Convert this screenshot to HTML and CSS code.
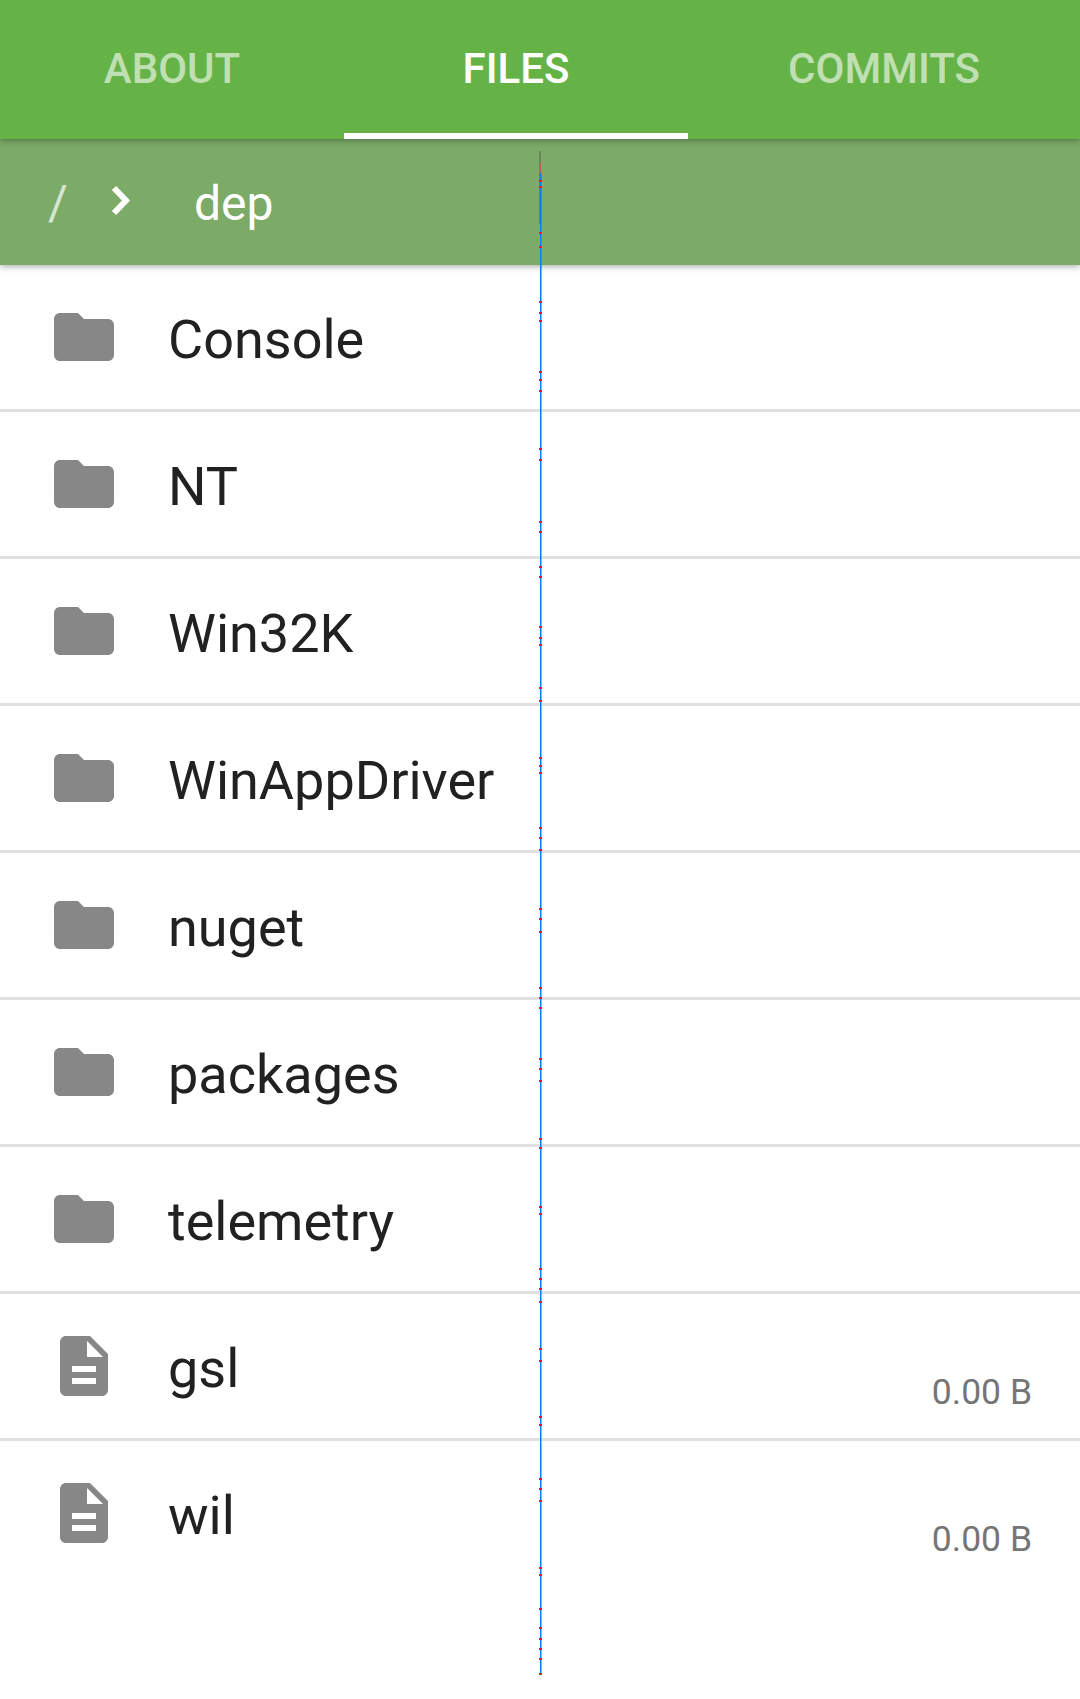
FILE: index.html
```html
<!DOCTYPE html>
<html lang="en">
<head>
    <meta charset="UTF-8">
    <meta name="viewport" content="width=device-width, initial-scale=1.0">
    <title>Files</title>
    <link rel="stylesheet" href="styles.css">
</head>
<body>
    <svg width="0" height="0" class="defs">
        <symbol id="folder" viewBox="0 0 60 48">
            <path d="M6 0H24L30 6H54C57.3 6 60 8.7 60 12V42C60 45.3 57.300 48 54 48H6C2.700 48 0 45.300 0 42V6C0 2.700 2.700 0 6 0Z"/>
        </symbol>
        <symbol id="file" viewBox="0 0 48 60">
            <path fill-rule="evenodd" d="M6 0H30L48 18V54C48 57.300 45.300 60 42 60H6C2.700 60 0 57.300 0 54V6C0 2.700 2.700 0 6 0ZM27 5V21H43ZM12 30V36H36V30ZM12 42V48H36V42Z"/>
        </symbol>
    </svg>

    <nav class="tabs">
        <a class="tab">ABOUT</a>
        <a class="tab active">FILES</a>
        <a class="tab">COMMITS</a>
    </nav>

    <div class="crumbs">
        <span class="root">/</span>
        <svg class="chevron" viewBox="0 0 20 32"><path d="M3 3L15 15.500L3 28"/></svg>
        <span class="dir">dep</span>
    </div>

    <ul class="list">
        <li class="row"><svg class="icon"><use href="#folder"/></svg><span class="name">Console</span></li>
        <li class="row"><svg class="icon"><use href="#folder"/></svg><span class="name">NT</span></li>
        <li class="row"><svg class="icon"><use href="#folder"/></svg><span class="name">Win32K</span></li>
        <li class="row"><svg class="icon"><use href="#folder"/></svg><span class="name">WinAppDriver</span></li>
        <li class="row"><svg class="icon"><use href="#folder"/></svg><span class="name">nuget</span></li>
        <li class="row"><svg class="icon"><use href="#folder"/></svg><span class="name">packages</span></li>
        <li class="row"><svg class="icon"><use href="#folder"/></svg><span class="name">telemetry</span></li>
        <li class="row"><svg class="icon doc"><use href="#file"/></svg><span class="name">gsl</span><span class="size">0.00 B</span></li>
        <li class="row last"><svg class="icon doc"><use href="#file"/></svg><span class="name">wil</span><span class="size">0.00 B</span></li>
    </ul>

    <!-- layout bounds guide drawn over the page -->
    <svg class="guide" viewBox="0 0 4 1530">
        <rect class="guide-grey" x="1" y="0" width="2" height="73"/>
        <rect class="guide-pink" x="1" y="12" width="2" height="11"/>
        <rect class="guide-blue" x="2" y="22" width="1.500" height="1500"/>
        <path class="guide-dots" d="M1 29h3v2h-3zM1 35h3v2h-3zM1 81h3v2h-3zM1 95h3v2h-3zM1 150h3v2h-3zM1 161h3v2h-3zM1 169h3v2h-3zM1 220h3v2h-3zM1 228h3v2h-3zM1 239h3v2h-3zM1 297h3v2h-3zM1 308h3v2h-3zM1 370h3v2h-3zM1 380h3v2h-3zM1 415h3v2h-3zM1 425h3v2h-3zM1 475h3v2h-3zM1 486h3v2h-3zM1 493h3v2h-3zM1 536h3v2h-3zM1 549h3v2h-3zM1 606h3v2h-3zM1 614h3v2h-3zM1 621h3v2h-3zM1 676h3v2h-3zM1 686h3v2h-3zM1 698h3v2h-3zM1 757h3v2h-3zM1 767h3v2h-3zM1 780h3v2h-3zM1 836h3v2h-3zM1 846h3v2h-3zM1 856h3v2h-3zM1 907h3v2h-3zM1 917h3v2h-3zM1 929h3v2h-3zM1 987h3v2h-3zM1 996h3v2h-3zM1 1055h3v2h-3zM1 1062h3v2h-3zM1 1117h3v2h-3zM1 1127h3v2h-3zM1 1137h3v2h-3zM1 1150h3v2h-3zM1 1197h3v2h-3zM1 1209h3v2h-3zM1 1265h3v2h-3zM1 1273h3v2h-3zM1 1327h3v2h-3zM1 1337h3v2h-3zM1 1349h3v2h-3zM1 1416h3v2h-3zM1 1423h3v2h-3zM1 1457h3v2h-3zM1 1476h3v2h-3zM1 1487h3v2h-3zM1 1497h3v2h-3zM1 1507h3v2h-3zM1 1522h3v2h-3z"/>
    </svg>
</body>
</html>
```

FILE: styles.css
```css
body {
    margin: 0;
    height: 1699px;
    overflow: hidden;
    position: relative;
    background-color: #fff;
    font-family: Roboto, sans-serif;
}
.defs {
    position: absolute;
}
.tabs {
    position: relative;
    z-index: 2;
    display: grid;
    grid-template-columns: 344px 344px 392px;
    height: 139px;
    background-color: #65b347;
    box-shadow: 0 2px 6px rgba(0, 0, 0, 0.3);
}
.tab {
    box-sizing: border-box;
    display: flex;
    align-items: center;
    justify-content: center;
    height: 139px;
    padding-bottom: 2px;
    font-size: 42px;
    font-weight: 500;
    color: rgba(255, 255, 255, 0.6);
}
.tab.active {
    padding-top: 4px;
    padding-bottom: 0;
    color: #fff;
    border-bottom: 6px solid #fff;
}
.crumbs {
    position: relative;
    z-index: 1;
    display: flex;
    align-items: center;
    height: 126px;
    padding-left: 48px;
    background-color: #7bab67;
    box-shadow: 0 2px 6px rgba(0, 0, 0, 0.3);
    color: #fff;
    font-size: 48px;
}
.root {
    opacity: 0.7;
    width: 63px;
}
.chevron {
    width: 20px;
    height: 32px;
    fill: none;
    stroke: #fff;
    stroke-width: 6px;
    margin-bottom: 2px;
}
.dir {
    margin-left: 63px;
    padding-top: 2px;
}
.list {
    list-style: none;
    margin: 0;
    padding: 0;
}
.row {
    display: flex;
    align-items: center;
    height: 144px;
    border-bottom: 3px solid #e0e0e0;
    padding: 0 48px 0 54px;
    font-size: 54px;
    color: #212121;
}
.row.last {
    border-bottom: none;
}
.icon {
    width: 60px;
    height: 48px;
    fill: #878787;
    margin-right: 54px;
}
.icon.doc {
    width: 48px;
    height: 60px;
    margin-left: 6px;
    margin-right: 60px;
}
.name {
    flex: 1;
    padding-top: 4px;
}
.size {
    font-size: 35.500px;
    color: #757575;
    margin-top: 52px;
}
.guide {
    position: absolute;
    z-index: 3;
    left: 538px;
    top: 151px;
    width: 4px;
    height: 1530px;
}
.guide-grey {
    fill: rgba(90, 90, 90, 0.5);
}
.guide-pink {
    fill: rgba(255, 60, 90, 0.5);
}
.guide-blue {
    fill: #0a78ff;
}
.guide-dots {
    fill: #f01c1c;
}
```
